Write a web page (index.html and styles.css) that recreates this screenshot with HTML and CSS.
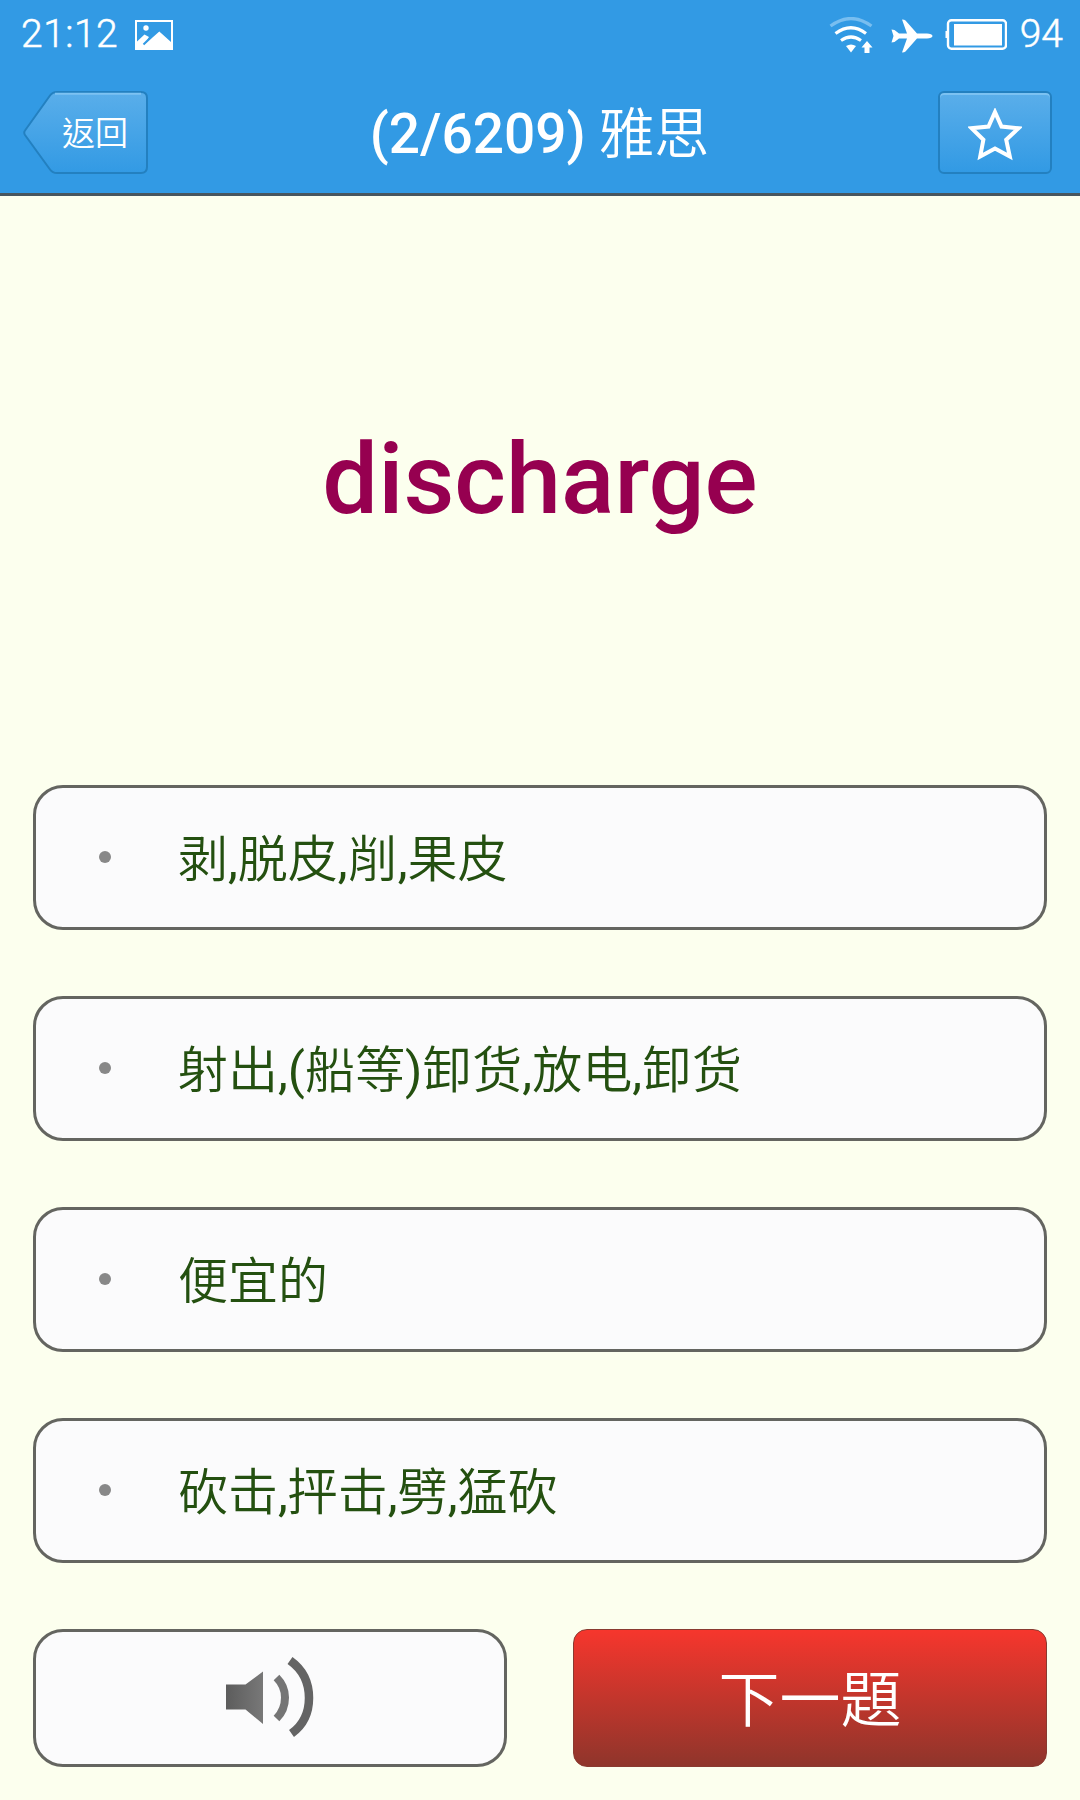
FILE: index.html
```
<!DOCTYPE html>
<html lang="zh-Hant">
<head>
    <meta charset="utf-8">
    <title>雅思</title>
    <link rel="stylesheet" href="styles.css">
</head>
<body>
<header>
    <div class="status-bar">
        <span class="clock">21:12</span>
        <svg class="icon-picture" width="38" height="30" viewBox="0 0 38 30">
            <rect x="1" y="1" width="36" height="28" fill="none" stroke="#fff" stroke-width="2"/>
            <circle cx="11" cy="8" r="2.7" fill="#fff"/>
            <path d="M2 21.5L9.5 14.5L14 17L9 26H2Z" fill="#fff"/>
            <path d="M8.5 25.5L24.3 11.5L36 22V29H2V24Z" fill="#fff"/>
            <path d="M8.5 24.5L16 17" stroke="#329ae4" stroke-width="2"/>
        </svg>
        <div class="status-right">
            <svg class="icon-wifi" width="44" height="37" viewBox="0 0 44 37">
                <path d="M1.5 9Q22 -6 42.5 9" fill="none" stroke="#78bef0" stroke-width="3.2"/>
                <path d="M6.5 16.5Q22 5 37 16.5M12 23.5Q22 16.5 32 23.5" fill="none" stroke="#fff" stroke-width="3.2"/>
                <path d="M17 29Q22 26 27 29L22 35.5Z" fill="#fff"/>
                <path d="M38 24L43.5 30.5H40.5V36H35.5V30.5H32.5Z" fill="#fff"/>
            </svg>
            <svg class="icon-plane" width="42" height="34" viewBox="0 0 42 34">
                <path d="M41.5 17C41.5 15.5 39 14.5 36 14.5H26L14.5 1.5Q13.5 .5 11 .5L16 14.5H8L3.5 11L.5 10.5L2.5 17L.5 23.5L3.5 23L8 19.5H16L11 33.5Q13.5 33.5 14.5 32.5L26 19.5H36C39 19.5 41.5 18.5 41.5 17Z" fill="#fff"/>
            </svg>
            <svg class="icon-battery" width="62" height="31" viewBox="0 0 62 31">
                <rect x="3" y="1.2" width="58" height="28.6" rx="3.5" fill="none" stroke="#fff" stroke-width="2.4"/>
                <rect x="9" y="5" width="48" height="21.5" fill="#fff"/>
                <path d="M3 12H.5V19H3Z" fill="#fff"/>
            </svg>
            <span class="level">94</span>
        </div>
    </div>
    <div class="nav-bar">
        <a class="back" href="#">
            <svg class="back-shape" width="126" height="84" viewBox="0 0 126 84">
                <defs>
                    <linearGradient id="glossy" x1="0" y1="0" x2="0" y2="1">
                        <stop offset="0" stop-color="#5aaeea"/>
                        <stop offset="1" stop-color="#329ae4"/>
                    </linearGradient>
                </defs>
                <path d="M2 39.5L27 4.5Q29.5 1 34 1H118Q124 1 124 7V76Q124 82 118 82H34Q29.5 82 27 78.5L2 44Q.5 41.5 2 39.5Z" fill="url(#glossy)" stroke="#2380c0" stroke-width="2"/>
                <path d="M32 2.8H118" stroke="#7cc2f2" stroke-width="2"/>
            </svg>
            <span class="back-text">返回</span>
        </a>
        <h1>(2/6209) <span>雅思</span></h1>
        <a class="star" href="#">
            <svg width="54" height="53" viewBox="0 0 54 53">
                <path d="M27 4L33.5 18.6L50.5 20.2L38.2 31.7L41.8 48.5L27 40.6L12.2 48.5L15.4 31.7L3.5 20.2L20.5 18.6Z" fill="none" stroke="#fff" stroke-width="4"/>
            </svg>
        </a>
    </div>
</header>

<main>
    <div class="word">discharge</div>
    <ul class="options">
        <li><span class="dot"></span><span class="meaning">剥,脱皮,削,果皮</span></li>
        <li><span class="dot"></span><span class="meaning">射出,(船等)卸货,放电,卸货</span></li>
        <li><span class="dot"></span><span class="meaning">便宜的</span></li>
        <li><span class="dot"></span><span class="meaning">砍击,抨击,劈,猛砍</span></li>
    </ul>
    <div class="actions">
        <button class="sound">
            <svg width="88" height="80" viewBox="0 0 88 80">
                <defs>
                    <linearGradient id="speaker" x1="0" y1="0" x2="1" y2="0">
                        <stop offset="0" stop-color="#5c5c5c"/>
                        <stop offset="1" stop-color="#787878"/>
                    </linearGradient>
                </defs>
                <path d="M0 27.5H19.5L37 14.5V67L19.5 52.5H0Z" fill="url(#speaker)"/>
                <path d="M50.5 20.5Q59 29 59 40.5Q59 53 50.5 61.5" fill="none" stroke="#757575" stroke-width="8"/>
                <path d="M64 3.5Q83 17 83 41Q83 64 65.5 76.5" fill="none" stroke="#646464" stroke-width="8.5"/>
            </svg>
        </button>
        <button class="next">下一題</button>
    </div>
</main>
</body>
</html>
```
FILE: styles.css
```
* {
    box-sizing: border-box;
}
body {
    margin: 0;
    height: 1800px;
    background-color: #fcffee;
    font-family: Roboto, "Noto Sans CJK TC DemiLight", "Noto Sans CJK TC", sans-serif;
    overflow: hidden;
}
header {
    height: 196px;
    background-color: #329ae4;
    border-bottom: 3px solid #48565e;
    color: #fff;
}
.status-bar {
    display: flex;
    height: 69px;
    padding: 0 17px 0 21px;
    font-size: 39px;
    font-weight: 300;
    line-height: 68px;
    -webkit-text-stroke: 0.5px #fff;
}
.clock {
    width: 114px;
    letter-spacing: 0.5px;
}
.icon-picture {
    margin-top: 20px;
}
.status-right {
    display: flex;
    margin-left: auto;
}
.icon-wifi {
    margin: 17px 18px 0 0;
}
.icon-plane {
    margin: 19px 12px 0 0;
}
.icon-battery {
    margin: 19px 13px 0 0;
}
.nav-bar {
    display: flex;
    justify-content: space-between;
    padding: 22px 28px 0 23px;
}
.back {
    display: grid;
    width: 126px;
    height: 84px;
    color: #fff;
    text-decoration: none;
}
.back-shape,
.back-text {
    grid-area: 1 / 1;
}
.back-text {
    padding-left: 39px;
    font-size: 33px;
    line-height: 85px;
}
h1 {
    margin: 0 8px 0 0;
    font-size: 55px;
    font-weight: 500;
    line-height: 87px;
    white-space: nowrap;
}
h1 span {
    font-weight: 400;
}
.star {
    display: flex;
    justify-content: center;
    align-items: center;
    width: 114px;
    height: 83px;
    padding-top: 3px;
    border: 2px solid #2380c0;
    border-radius: 6px;
    background: linear-gradient(#5aaeea, #329ae4);
    box-shadow: inset 0 2px 0 #7cc2f2;
}
main {
    padding: 0 33px;
}
.word {
    height: 589px;
    color: #960050;
    font-size: 99px;
    font-weight: 500;
    line-height: 566px;
    text-align: center;
}
.options {
    display: flex;
    flex-direction: column;
    gap: 66px;
    margin: 0 0 66px;
    padding: 0;
    list-style: none;
}
.options li {
    display: flex;
    align-items: center;
    height: 145px;
    padding-left: 63px;
    border: 3px solid #646560;
    border-radius: 30px;
    background-color: #fbfbfc;
    color: #245010;
    font-family: Roboto, "Noto Sans CJK SC DemiLight", "Noto Sans CJK SC", sans-serif;
    font-size: 50px;
}
.dot {
    width: 12px;
    height: 12px;
    margin: 0 67px 1px 0;
    border-radius: 50%;
    background-color: #888;
}
.meaning {
    padding-bottom: 5px;
}
.actions {
    display: grid;
    grid-template-columns: 1fr 1fr;
    gap: 66px;
}
.actions button {
    height: 138px;
    padding: 0;
    font-family: inherit;
}
.sound {
    display: flex;
    justify-content: center;
    align-items: center;
    border: 3px solid #646560;
    border-radius: 30px;
    background-color: #fbfbfc;
}
.sound svg {
    margin-bottom: 2px;
}
.actions .next {
    padding-bottom: 5px;
    border: 1px solid #893a30;
    border-radius: 14px;
    background: linear-gradient(#f6362d, #8f352b);
    color: #fff;
    font-size: 61px;
}
```
